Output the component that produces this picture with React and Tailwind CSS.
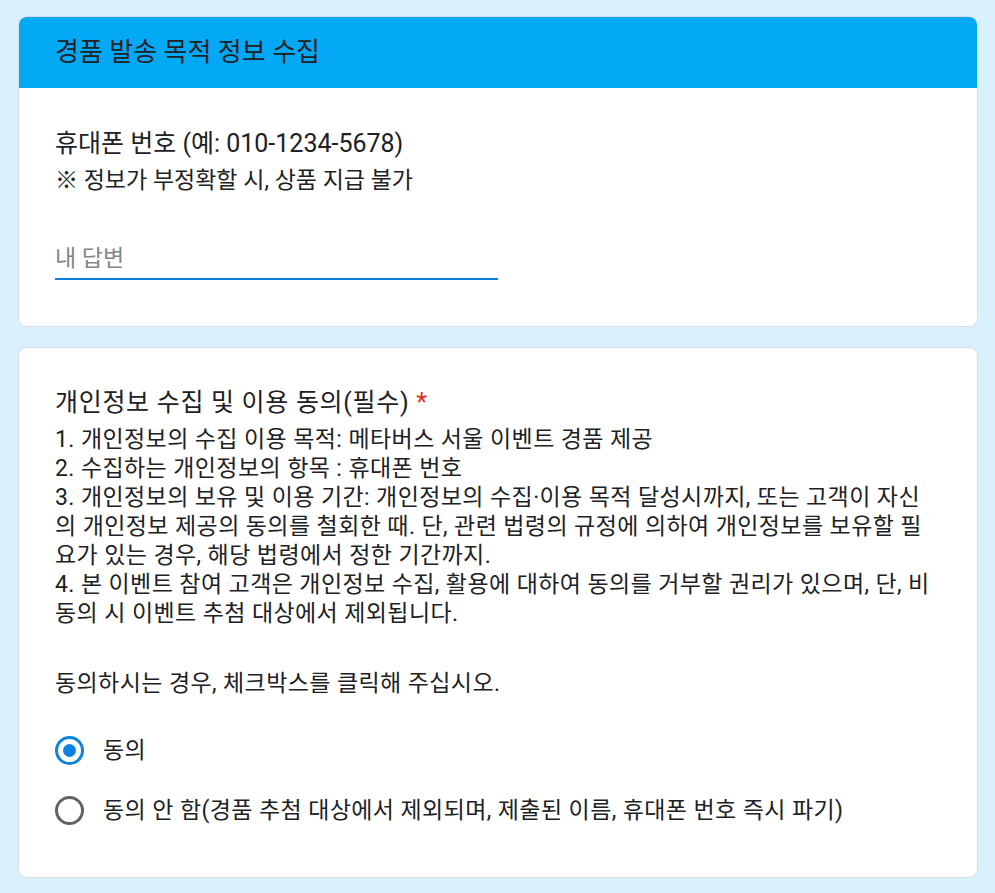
const font = { fontFamily: '"Roboto", "Noto Sans CJK KR", sans-serif' };

const bodyLines = [
    "1. 개인정보의 수집 이용 목적: 메타버스 서울 이벤트 경품 제공",
    "2. 수집하는 개인정보의 항목 : 휴대폰 번호",
    "3. 개인정보의 보유 및 이용 기간: 개인정보의 수집·이용 목적 달성시까지, 또는 고객이 자신",
    "의 개인정보 제공의 동의를 철회한 때. 단, 관련 법령의 규정에 의하여 개인정보를 보유할 필",
    "요가 있는 경우, 해당 법령에서 정한 기간까지.",
    "4. 본 이벤트 참여 고객은 개인정보 수집, 활용에 대하여 동의를 거부할 권리가 있으며, 단, 비",
    "동의 시 이벤트 추첨 대상에서 제외됩니다.",
];

const Radio = ({ checked, label }) => (
    <label className="flex items-center h-[48px] gap-[19px] cursor-pointer">
        <span
            className={
                checked
                    ? "w-[29px] h-[29px] rounded-full border-[3px] border-[#0b84e0] flex items-center justify-center shrink-0"
                    : "w-[29px] h-[29px] rounded-full border-[3px] border-[#5f6368] flex items-center justify-center shrink-0"
            }
        >
            {checked && <span className="w-[13px] h-[13px] rounded-full bg-[#0b84e0]" />}
        </span>
        <span className="text-[23px] leading-[29px] tracking-[0.4px] text-[#202124] whitespace-nowrap">{label}</span>
    </label>
);

export default function App() {
    return (
        <div className="min-h-screen bg-[#d9f0fd] pt-[16px] pb-[16px]" style={font}>
            <div className="w-[960px] ml-[18px] flex flex-col gap-[20px]">

                {/* CARD 1 */}
                <div className="bg-white border border-[#dadce0] rounded-[9px] overflow-hidden">
                    <div className="bg-[#03a9f4] h-[72px] flex items-center px-[37px] -mx-px -mt-px">
                        <h1 className="text-[26px] text-[#202124]">경품 발송 목적 정보 수집</h1>
                    </div>
                    <div className="px-[36px] pt-[40px] pb-[46px]">
                        <div className="text-[25px] leading-[32px] text-[#202124]">
                            휴대폰 번호 (예: 010-1234-5678)
                        </div>
                        <div className="mt-[6px] text-[23px] leading-[30px] text-[#202124]">
                            ※ 정보가 부정확할 시, 상품 지급 불가
                        </div>
                        <div className="mt-[44px] w-[443px] h-[40px] border-b-2 border-[#0b7fdf] flex items-center">
                            <input
                                type="text"
                                placeholder="내 답변"
                                className="w-full outline-none text-[23px] text-[#202124] placeholder-[#80868b] bg-transparent"
                            />
                        </div>
                    </div>
                </div>

                {/* CARD 2 */}
                <div className="bg-white border border-[#dadce0] rounded-[9px] px-[36px] pt-[39px] pb-[43px]">
                    <div className="text-[25px] leading-[32px] tracking-[0.7px] text-[#202124]">
                        개인정보 수집 및 이용 동의(필수) <span className="text-[#d93025]">*</span>
                    </div>
                    <div className="mt-[6px] text-[23px] leading-[29px] tracking-[0.4px] text-[#202124]">
                        {bodyLines.map((line, i) => (
                            <p key={i} className="whitespace-nowrap">{line}</p>
                        ))}
                        <p className="mt-[41px] whitespace-nowrap">동의하시는 경우, 체크박스를 클릭해 주십시오.</p>
                    </div>
                    <div className="mt-[28px] flex flex-col gap-[12px]">
                        <Radio checked label="동의" />
                        <Radio label="동의 안 함(경품 추첨 대상에서 제외되며, 제출된 이름, 휴대폰 번호 즉시 파기)" />
                    </div>
                </div>

            </div>
        </div>
    );
}
